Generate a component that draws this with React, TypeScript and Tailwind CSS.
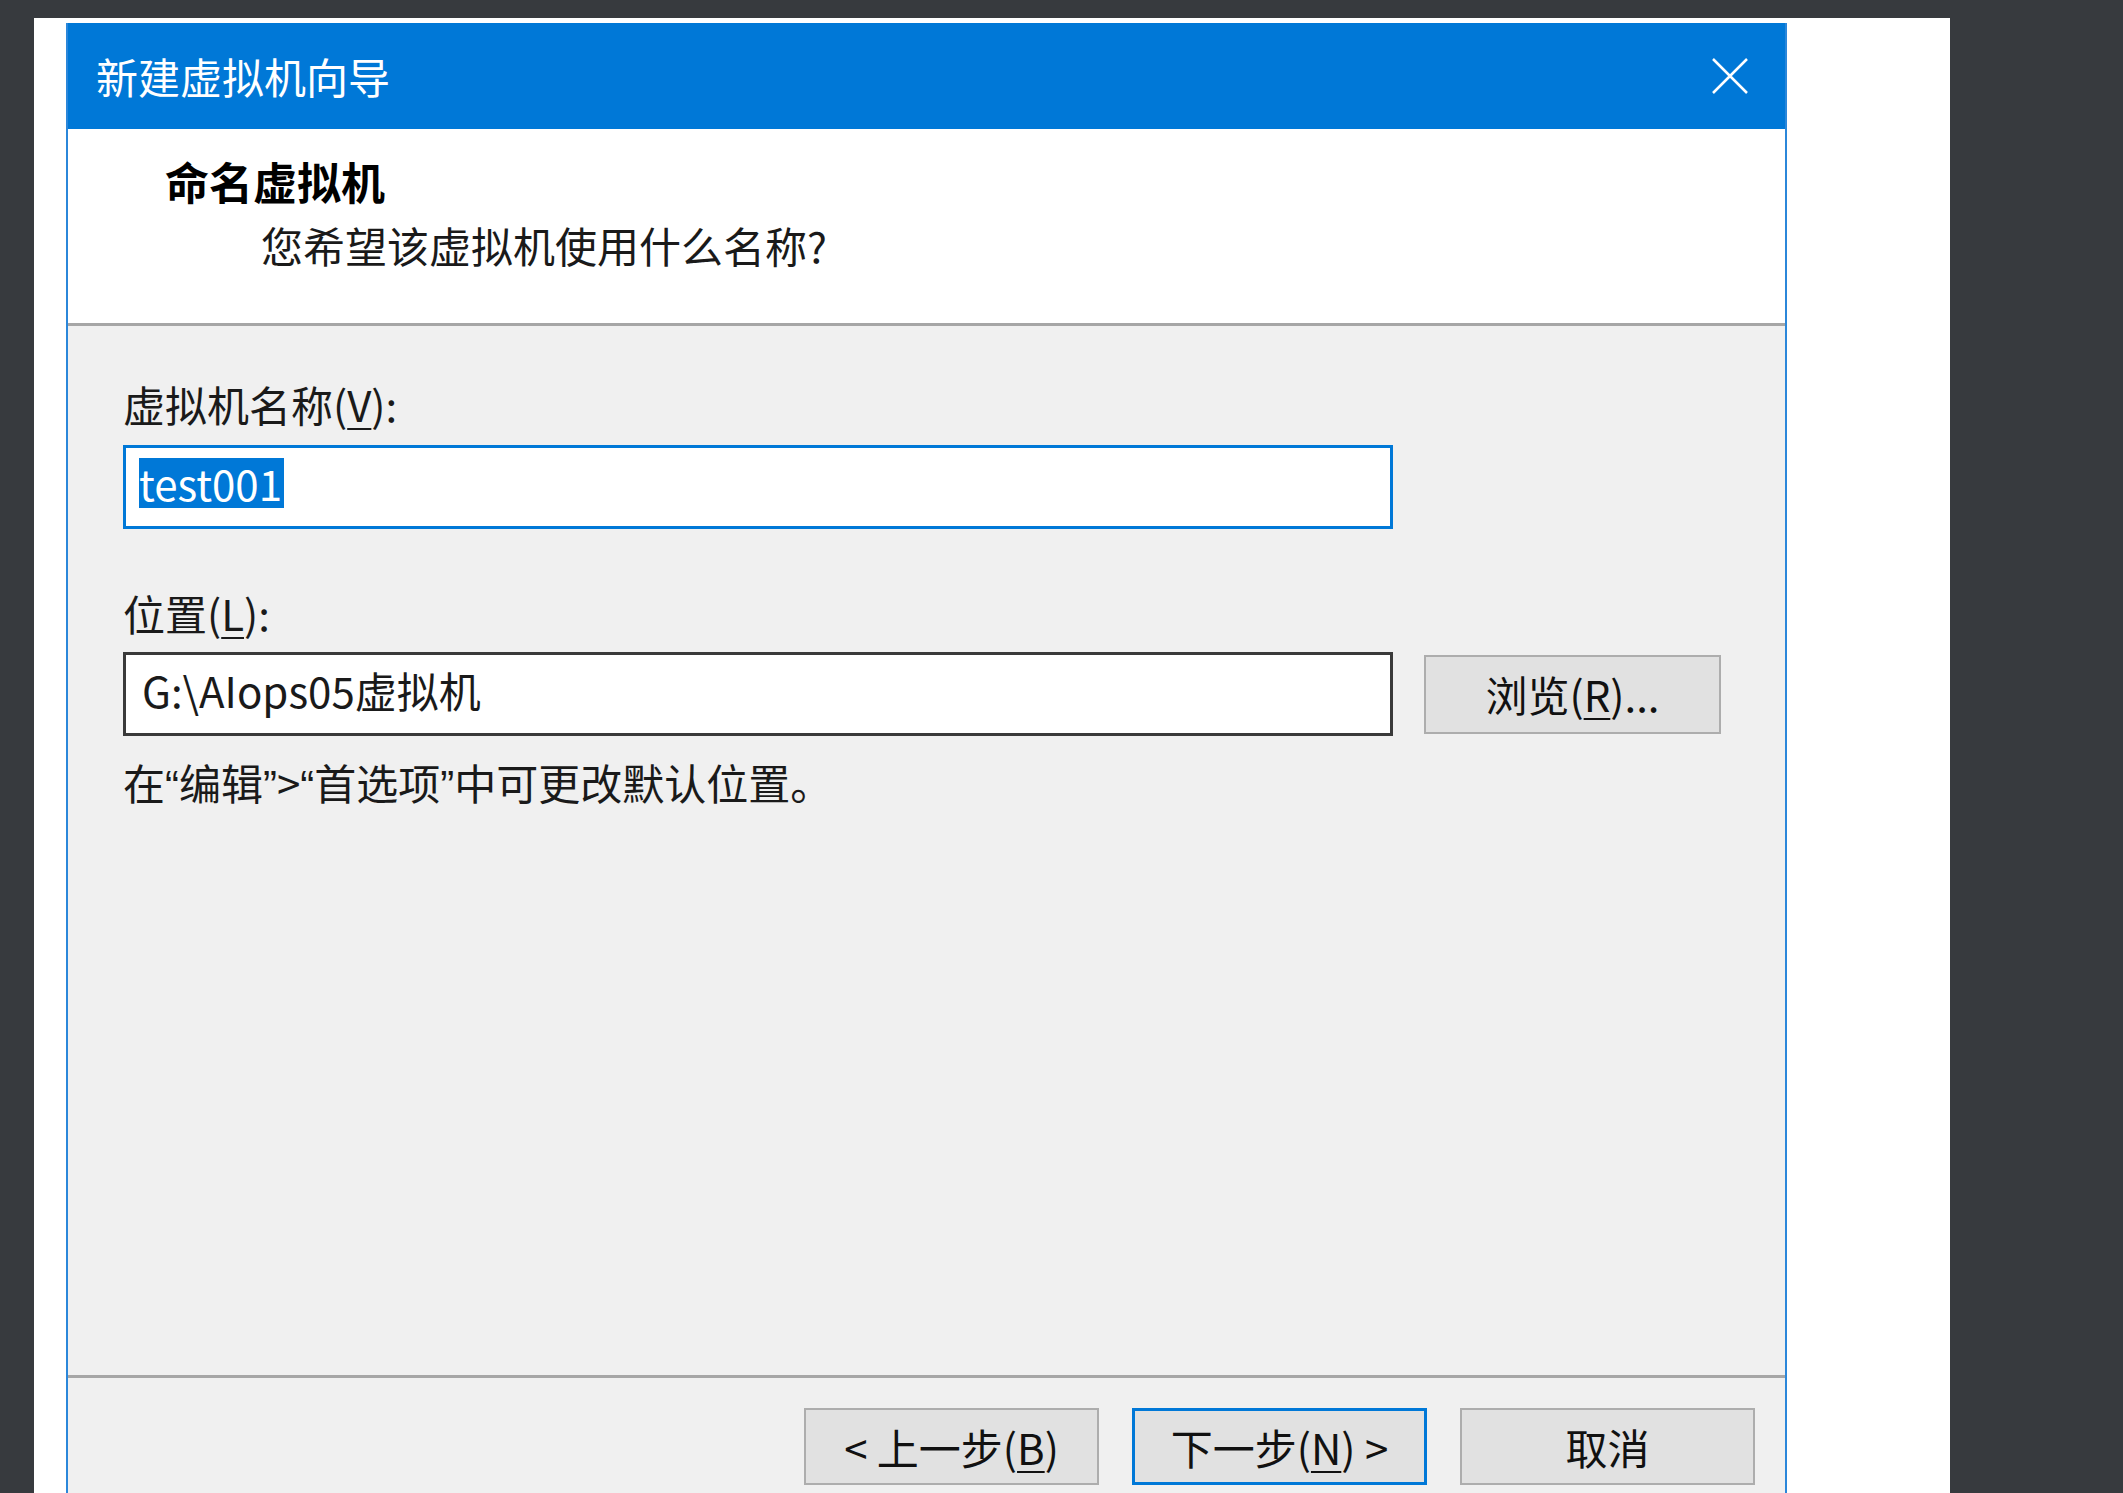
import React from "react";

const font = { fontFamily: "'Noto Sans CJK SC', 'Noto Sans', sans-serif" };

const Key = ({ k }: { k: string }) => <span className="underline underline-offset-[6px] decoration-2">{k}</span>;

// narrow curly quotes like the Windows dialog font
const Q = ({ c }: { c: string }) => <span style={{ fontFamily: "'Liberation Sans', sans-serif" }}>{c}</span>;

const CloseIcon = () => (
  <svg width="38" height="38" viewBox="0 0 38 38" fill="none">
    <path d="M2 2L36 36M36 2L2 36" stroke="white" strokeWidth="2.5" />
  </svg>
);

const Button = ({ children, primary }: { children: React.ReactNode; primary?: boolean }) => (
  <button
    className={
      primary
        ? "w-[295px] h-[77px] bg-[#e1e1e1] border-[3px] border-[#0078d7] text-[42px] leading-none text-[#111] flex items-center justify-center"
        : "w-[295px] h-[77px] bg-[#e1e1e1] border-2 border-[#adadad] text-[42px] leading-none text-[#111] flex items-center justify-center"
    }
  >
    {children}
  </button>
);

export default function App() {
  return (
    <div className="w-[2123px] h-[1493px] overflow-hidden bg-[#373a3e] pt-[18px] pl-[34px]" style={font}>
      <div className="w-[1916px] h-[1600px] bg-white pt-[5px] pl-[32px]">
        <div className="w-[1721px] h-[1600px] border-x-2 border-[#2b87da] bg-[#f0f0f0] flex flex-col">
          {/* title bar */}
          <div className="h-[106px] bg-[#0078d7] flex items-center justify-between pl-[28px] pr-[36px]">
            <span className="text-[42px] leading-none text-white">新建虚拟机向导</span>
            <CloseIcon />
          </div>

          {/* header */}
          <div className="h-[194px] bg-white pt-[30px]">
            <div className="pl-[97px] text-[44px] leading-none font-bold text-black">命名虚拟机</div>
            <div className="pl-[193px] mt-[21px] text-[42px] leading-none text-[#1a1a1a]">您希望该虚拟机使用什么名称?</div>
          </div>
          <div className="h-[3px] bg-[#a6a6a6]" />

          {/* body */}
          <div className="h-[1049px] px-[55px] pt-[57px] text-[42px] leading-none text-[#1a1a1a]">
            <div>
              虚拟机名称(<Key k="V" />):
            </div>
            <div className="mt-[20px] w-[1270px] h-[84px] bg-white border-[3px] border-[#0078d7] flex items-center pl-[13px] pb-[8px]">
              <span className="bg-[#0078d7] text-white h-[50px] flex items-center pr-[2px]">test001</span>
            </div>

            <div className="mt-[63px]">
              位置(<Key k="L" />):
            </div>
            <div className="mt-[18px] flex items-center gap-[31px]">
              <div className="w-[1270px] h-[84px] bg-white border-[3px] border-[#3a3a3a] flex items-center pl-[16px] pb-[8px]">
                G:\AIops05虚拟机
              </div>
              <button className="w-[297px] h-[79px] bg-[#e1e1e1] border-2 border-[#adadad] flex items-center justify-center text-[42px] leading-none text-[#111]">
                浏览(<Key k="R" />)...
              </button>
            </div>
            <div className="mt-[25px]">
              在<Q c="“" />编辑<Q c="”" />&gt;<Q c="“" />首选项<Q c="”" />中可更改默认位置。
            </div>
          </div>
          <div className="h-[3px] bg-[#a6a6a6]" />

          {/* footer */}
          <div className="pt-[30px] pr-[30px] flex justify-end gap-[33px]">
            <Button>
              &lt; 上一步(<Key k="B" />)
            </Button>
            <Button primary>
              下一步(<Key k="N" />) &gt;
            </Button>
            <Button>取消</Button>
          </div>
        </div>
      </div>
    </div>
  );
}
